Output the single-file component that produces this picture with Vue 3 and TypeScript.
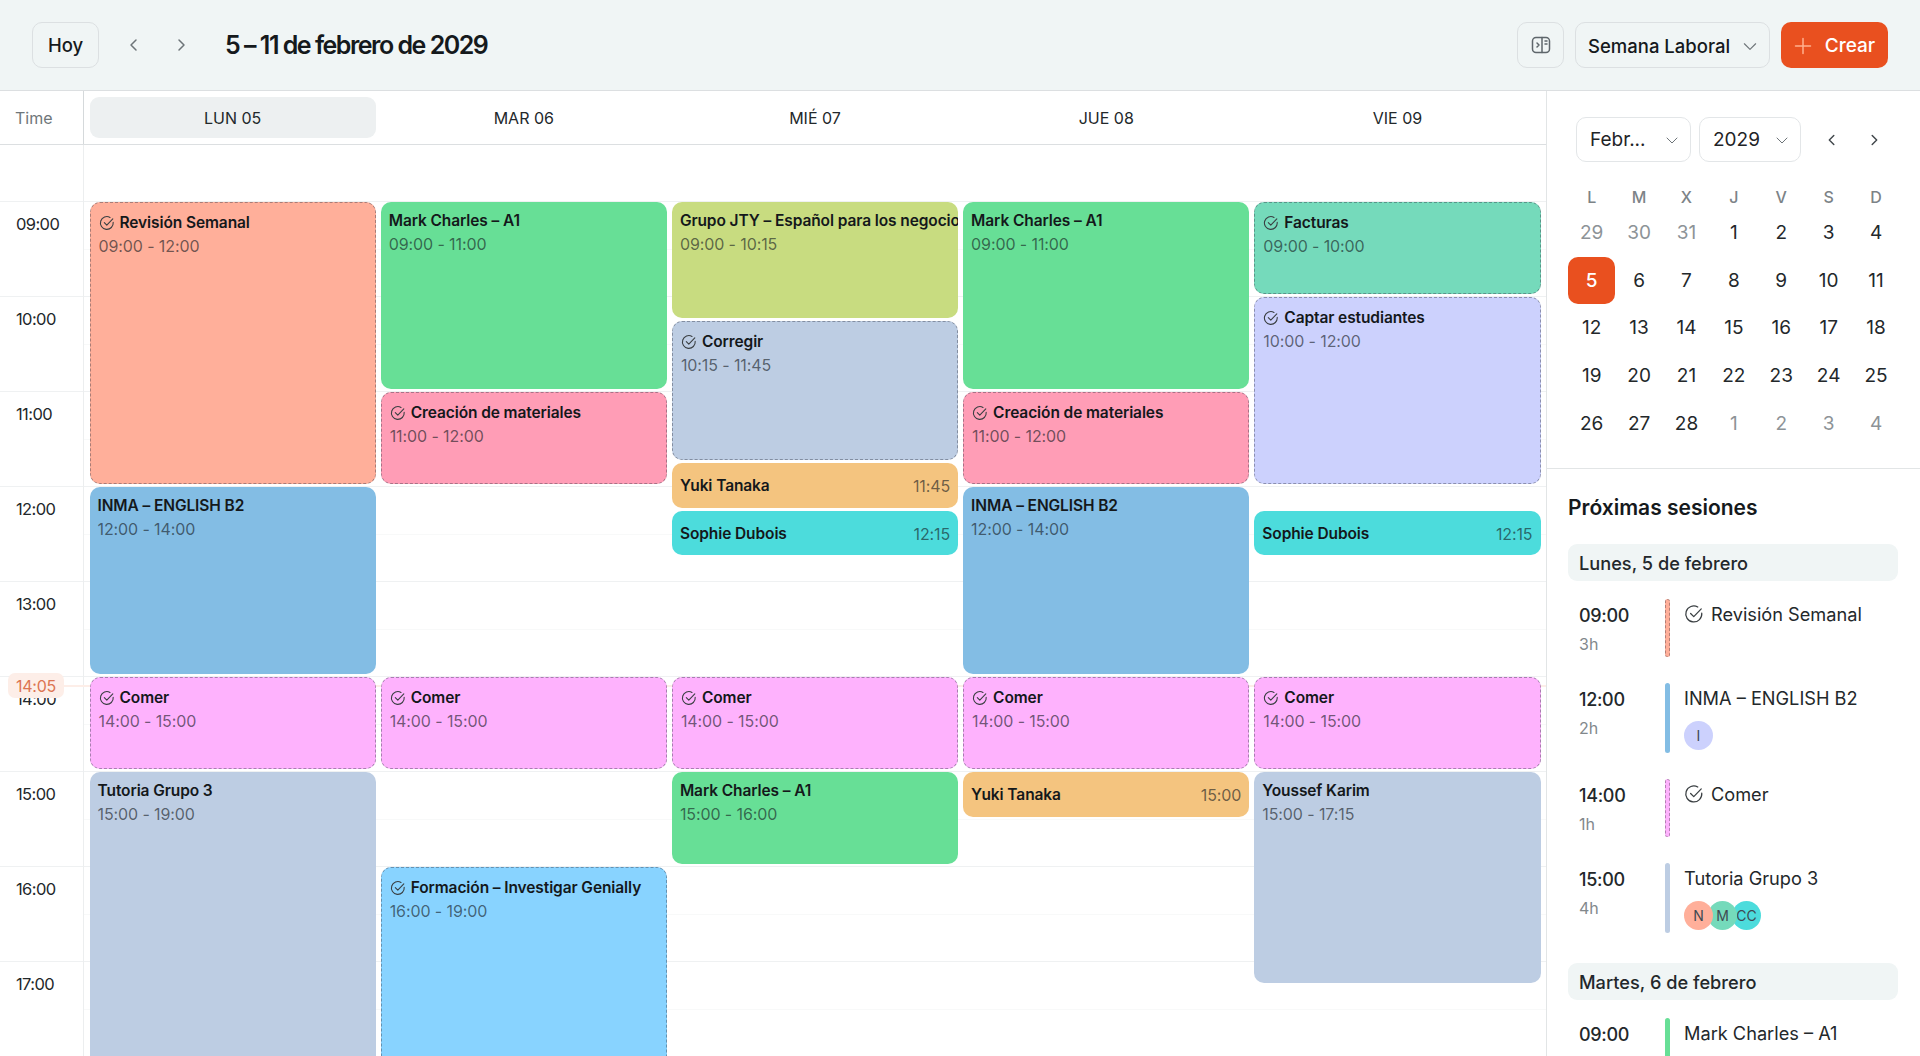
<template>
  <div class="app">
    <header class="topbar">
      <button class="btn today">Hoy</button>
      <button class="arrow"><svg width="20" height="20" viewBox="0 0 20 20"><path d="M12 5l-5 5 5 5" /></svg></button>
      <button class="arrow"><svg width="20" height="20" viewBox="0 0 20 20"><path d="M8 5l5 5-5 5" /></svg></button>
      <h1 class="range">5 – 11 de febrero de 2029</h1>
      <div class="spacer"></div>
      <button class="btn panel-btn">
        <svg width="20" height="20" viewBox="0 0 20 20">
          <rect x="1.5" y="2.5" width="17" height="15" rx="3.5" />
          <path d="M11 2.5v15M14 6h2M14 9h2M6 8l2 2-2 2" />
        </svg>
      </button>
      <button class="btn view-select">
        Semana Laboral
        <svg width="18" height="18" viewBox="0 0 16 16"><path d="M3 6l5 5 5-5" /></svg>
      </button>
      <button class="create">
        <svg width="18" height="18" viewBox="0 0 18 18"><path d="M9 1.5v15M1.5 9h15" /></svg>
        Crear
      </button>
    </header>

    <div class="body">
      <main class="calendar">
        <div class="week-head">
          <div class="time-label">Time</div>
          <div class="day-heads">
            <div v-for="(d, i) in days" :key="d.label" class="day-head">
              <span class="day-pill" :class="{ active: i === 0 }">{{ d.label }}</span>
            </div>
          </div>
        </div>

        <div class="grid">
          <div class="hours">
            <div v-for="h in hours" :key="h" class="hour">{{ h }}</div>
            <div class="now-chip">14:05</div>
          </div>
          <div class="columns">
            <div class="lines">
              <div v-for="h in hours" :key="h" class="line"></div>
            </div>
            <div class="now-line"></div>
            <div v-for="d in days" :key="d.label" class="col">
              <div
                v-for="e in d.events"
                :key="e.title + e.start"
                class="event"
                :class="{ task: e.task, compact: e.compact }"
                :style="eventStyle(e)"
              >
                <template v-if="e.compact">
                  <span class="ev-title">{{ e.title }}</span>
                  <span class="ev-time">{{ e.start }}</span>
                </template>
                <template v-else>
                  <div class="ev-title">
                    <svg v-if="e.task" class="check" width="16" height="16" viewBox="0 0 16 16">
                      <path d="M14.2 7.3a6.4 6.4 0 1 1-3.2-4.9" />
                      <path d="M5.3 7.6l2.5 2.5 6-6.2" />
                    </svg>
                    {{ e.title }}
                  </div>
                  <div class="ev-time">{{ e.start }} - {{ e.end }}</div>
                </template>
              </div>
            </div>
          </div>
        </div>
      </main>

      <aside class="side">
        <section class="mini">
          <div class="mini-controls">
            <button class="select month">
              <span>Febr...</span>
              <svg width="16" height="16" viewBox="0 0 16 16"><path d="M3 6l5 5 5-5" /></svg>
            </button>
            <button class="select year">
              <span>2029</span>
              <svg width="16" height="16" viewBox="0 0 16 16"><path d="M3 6l5 5 5-5" /></svg>
            </button>
            <button class="mini-arrow"><svg width="18" height="18" viewBox="0 0 20 20"><path d="M12 5l-5 5 5 5" /></svg></button>
            <button class="mini-arrow"><svg width="18" height="18" viewBox="0 0 20 20"><path d="M8 5l5 5-5 5" /></svg></button>
          </div>
          <div class="mini-grid">
            <div v-for="w in weekdays" :key="w" class="wd">{{ w }}</div>
            <div
              v-for="c in cells"
              :key="c.key"
              class="cell"
              :class="{ muted: c.muted, selected: c.selected }"
            >{{ c.n }}</div>
          </div>
        </section>

        <section class="upcoming">
          <h2>Próximas sesiones</h2>
          <div v-for="g in sessions" :key="g.day" class="group">
            <div class="band">{{ g.day }}</div>
            <div v-for="s in g.items" :key="s.title" class="session">
              <div class="s-time">
                <div class="s-start">{{ s.start }}</div>
                <div class="s-dur">{{ s.dur }}</div>
              </div>
              <div class="s-bar" :class="{ dotted: s.task }" :style="{ background: s.color }"></div>
              <div class="s-body">
                <div class="s-title">
                  <svg v-if="s.task" class="s-check" width="20" height="20" viewBox="0 0 16 16">
                    <path d="M14.2 7.3a6.4 6.4 0 1 1-3.2-4.9" />
                    <path d="M5.3 7.6l2.5 2.5 6-6.2" />
                  </svg>
                  {{ s.title }}
                </div>
                <div v-if="s.people" class="avatars">
                  <span
                    v-for="(p, i) in s.people"
                    :key="p.t"
                    class="avatar"
                    :style="{ background: p.c, zIndex: s.people.length - i }"
                  >{{ p.t }}</span>
                </div>
              </div>
            </div>
          </div>
        </section>
      </aside>
    </div>
  </div>
</template>

<script setup lang="ts">
interface CalEvent {
  title: string;
  start: string;
  end?: string;
  color: string;
  task?: boolean;
  compact?: boolean;
}

const HOUR = 95;
const FIRST = 8.4; // the grid is scrolled a little past 08:00

const C = {
  salmon: '#ffaf9a',
  green: '#67df96',
  lime: '#c8dc80',
  gray: '#bdcde3',
  orange: '#f4c47f',
  cyan: '#4cdcdc',
  pink: '#ff9db6',
  steel: '#83bde4',
  magenta: '#feb2fd',
  sky: '#88d3ff',
  teal: '#75dabb',
  lavender: '#ccd1fd',
};

const comer: CalEvent = { title: 'Comer', start: '14:00', end: '15:00', color: C.magenta, task: true };
const mark: CalEvent = { title: 'Mark Charles – A1', start: '09:00', end: '11:00', color: C.green };
const materiales: CalEvent = { title: 'Creación de materiales', start: '11:00', end: '12:00', color: C.pink, task: true };
const inma: CalEvent = { title: 'INMA – ENGLISH B2', start: '12:00', end: '14:00', color: C.steel };
const sophie: CalEvent = { title: 'Sophie Dubois', start: '12:15', end: '12:45', color: C.cyan, compact: true };

const days: { label: string; events: CalEvent[] }[] = [
  {
    label: 'LUN 05',
    events: [
      { title: 'Revisión Semanal', start: '09:00', end: '12:00', color: C.salmon, task: true },
      inma,
      comer,
      { title: 'Tutoria Grupo 3', start: '15:00', end: '19:00', color: C.gray },
    ],
  },
  {
    label: 'MAR 06',
    events: [
      mark,
      materiales,
      comer,
      { title: 'Formación – Investigar Genially', start: '16:00', end: '19:00', color: C.sky, task: true },
    ],
  },
  {
    label: 'MIÉ 07',
    events: [
      { title: 'Grupo JTY – Español para los negocios', start: '09:00', end: '10:15', color: C.lime },
      { title: 'Corregir', start: '10:15', end: '11:45', color: C.gray, task: true },
      { title: 'Yuki Tanaka', start: '11:45', end: '12:15', color: C.orange, compact: true },
      sophie,
      comer,
      { title: 'Mark Charles – A1', start: '15:00', end: '16:00', color: C.green },
    ],
  },
  {
    label: 'JUE 08',
    events: [
      mark,
      materiales,
      inma,
      comer,
      { title: 'Yuki Tanaka', start: '15:00', end: '15:30', color: C.orange, compact: true },
    ],
  },
  {
    label: 'VIE 09',
    events: [
      { title: 'Facturas', start: '09:00', end: '10:00', color: C.teal, task: true },
      { title: 'Captar estudiantes', start: '10:00', end: '12:00', color: C.lavender, task: true },
      sophie,
      comer,
      { title: 'Youssef Karim', start: '15:00', end: '17:15', color: C.gray },
    ],
  },
];

const hours = ['', '09:00', '10:00', '11:00', '12:00', '13:00', '14:00', '15:00', '16:00', '17:00'];

const toHours = (t: string) => {
  const [h, m] = t.split(':').map(Number);
  return h + m / 60;
};

const eventStyle = (e: CalEvent) => {
  const top = (toHours(e.start) - FIRST) * HOUR;
  const height = (toHours(e.end ?? e.start) - toHours(e.start)) * HOUR - 3;
  return {
    top: `${top}px`,
    height: `${height}px`,
    background: e.color,
  };
};

const weekdays = ['L', 'M', 'X', 'J', 'V', 'S', 'D'];

const cells = [
  ...[29, 30, 31].map((n) => ({ key: `p${n}`, n, muted: true, selected: false })),
  ...Array.from({ length: 28 }, (_, i) => ({ key: `c${i}`, n: i + 1, muted: false, selected: i === 4 })),
  ...[1, 2, 3, 4].map((n) => ({ key: `n${n}`, n, muted: true, selected: false })),
];

interface Session {
  start: string;
  dur: string;
  title: string;
  color: string;
  task?: boolean;
  people?: { t: string; c: string }[];
}

const sessions: { day: string; items: Session[] }[] = [
  {
    day: 'Lunes, 5 de febrero',
    items: [
      { start: '09:00', dur: '3h', title: 'Revisión Semanal', color: C.salmon, task: true },
      {
        start: '12:00',
        dur: '2h',
        title: 'INMA – ENGLISH B2',
        color: C.steel,
        people: [{ t: 'I', c: C.lavender }],
      },
      { start: '14:00', dur: '1h', title: 'Comer', color: C.magenta, task: true },
      {
        start: '15:00',
        dur: '4h',
        title: 'Tutoria Grupo 3',
        color: C.gray,
        people: [
          { t: 'N', c: C.salmon },
          { t: 'M', c: C.teal },
          { t: 'CC', c: C.cyan },
        ],
      },
    ],
  },
  {
    day: 'Martes, 6 de febrero',
    items: [{ start: '09:00', dur: '2h', title: 'Mark Charles – A1', color: C.green }],
  },
];
</script>

<style>
html,
body {
  margin: 0;
  height: 100%;
  overflow: hidden;
  background: #fff;
}
</style>

<style scoped>
.app {
  width: 1920px;
  height: 1056px;
  display: flex;
  flex-direction: column;
  overflow: hidden;
  font-family: 'Inter', 'Noto Sans', sans-serif;
  color: #15191c;
}

button {
  font: inherit;
  color: inherit;
  background: none;
  border: none;
  padding: 0;
}

svg {
  fill: none;
  stroke: currentColor;
  stroke-linecap: round;
  stroke-linejoin: round;
}

.topbar {
  height: 91px;
  flex: none;
  box-sizing: border-box;
  padding: 0 32px;
  display: flex;
  align-items: center;
  background: #f0f5f5;
  border-bottom: 1px solid #dcdfe1;
}

.btn {
  height: 46px;
  box-sizing: border-box;
  border: 1.5px solid #dce0e2;
  border-radius: 10px;
  display: flex;
  align-items: center;
  font-size: 18.5px;
  font-weight: 500;
}

.today {
  width: 67px;
  margin-right: 11px;
  justify-content: center;
}

.arrow {
  width: 47px;
  height: 46px;
  display: flex;
  align-items: center;
  justify-content: center;
  color: #6d7478;
  stroke-width: 1.5;
}

.range {
  margin: 0 0 0 21px;
  font-size: 25px;
  font-weight: 600;
  letter-spacing: -1.5px;
}

.spacer {
  flex: 1;
}

.panel-btn {
  width: 47px;
  justify-content: center;
  color: #5e666b;
  stroke-width: 1.5;
}

.view-select {
  width: 195px;
  margin-left: 11px;
  padding: 1px 10px 0 12px;
  justify-content: space-between;
}

.view-select svg {
  color: #6d7478;
}

.create {
  width: 107px;
  height: 46px;
  margin-left: 11px;
  padding-top: 1px;
  border-radius: 10px;
  background: #e9501f;
  color: #fff;
  font-size: 19px;
  font-weight: 500;
  display: flex;
  align-items: center;
  justify-content: center;
  gap: 13px;
}

.create svg {
  color: #ffb08f;
  stroke-width: 1.5;
}

.body {
  flex: 1;
  min-height: 0;
  display: flex;
}

.calendar {
  width: 1546px;
  flex: none;
  display: flex;
  flex-direction: column;
  border-right: 1px solid #e2e5e6;
  box-sizing: content-box;
  overflow: hidden;
}

.week-head {
  height: 54px;
  flex: none;
  box-sizing: border-box;
  display: flex;
  border-bottom: 1px solid #dcdfe1;
}

.time-label {
  width: 84px;
  flex: none;
  box-sizing: border-box;
  padding-left: 15px;
  display: flex;
  align-items: center;
  border-right: 1px solid #d5d9db;
  font-size: 16px;
  color: #6f767a;
}

.day-heads {
  flex: 1;
  min-width: 0;
  padding: 0 3px;
  display: flex;
}

.day-head {
  flex: 1;
  min-width: 0;
  padding: 6px 2.5px 6px;
  display: flex;
}

.day-pill {
  flex: 1;
  padding-top: 1px;
  display: flex;
  align-items: center;
  justify-content: center;
  border-radius: 9px;
  font-size: 16px;
  color: #23282b;
}

.day-pill.active {
  background: #edf0f1;
}

.grid {
  flex: 1;
  min-height: 0;
  display: flex;
  overflow: hidden;
}

.hours {
  width: 84px;
  flex: none;
  position: relative;
  box-sizing: border-box;
  border-right: 1px solid #eceeef;
}

.hour {
  height: 95px;
  box-sizing: border-box;
  padding: 10px 0 0 16px;
  font-size: 16.5px;
  line-height: 24px;
  letter-spacing: -0.6px;
  color: #23282b;
  border-bottom: 1px solid #eff1f2;
}

.hour:first-child {
  height: 57px;
}

.now-chip {
  position: absolute;
  left: 8px;
  top: 528px;
  width: 56px;
  height: 25px;
  border-radius: 7px;
  background: #fdeee8;
  color: #dc7452;
  font-size: 16px;
  letter-spacing: -0.3px;
  line-height: 26px;
  text-align: center;
}

.now-chip::after {
  content: '';
  position: absolute;
  left: 56px;
  top: 12px;
  width: 20px;
  border-top: 2px solid #fdeee8;
}

.columns {
  flex: 1;
  min-width: 0;
  padding: 0 3px;
  display: flex;
  position: relative;
}

.lines {
  position: absolute;
  inset: 0;
}

.line {
  height: 95px;
  box-sizing: border-box;
  position: relative;
  border-bottom: 1.5px solid #eff1f2;
}

.line::after {
  content: '';
  position: absolute;
  left: 0;
  right: 0;
  top: 47px;
  border-top: 1px solid #f8f9f9;
}

.line:first-child {
  height: 57px;
}

.line:first-child::after {
  display: none;
}

.now-line {
  position: absolute;
  left: 0;
  right: 0;
  top: 540px;
  border-top: 2px solid #fdeee8;
}

.col {
  flex: 1;
  min-width: 0;
  position: relative;
}

.event {
  position: absolute;
  left: 2.5px;
  right: 2.5px;
  box-sizing: border-box;
  border-radius: 10px;
  padding: 8px;
  overflow: hidden;
  white-space: nowrap;
}

.event.task {
  padding: 9px 8px;
  border: 1.2px dashed rgba(50, 55, 70, 0.42);
}

.event.compact {
  padding-top: 9px;
  display: flex;
  align-items: center;
  justify-content: space-between;
}

.ev-title {
  display: flex;
  align-items: center;
  font-size: 15.5px;
  line-height: 22px;
  font-weight: 600;
  letter-spacing: -0.1px;
  color: #14181b;
}

.check {
  flex: none;
  margin-right: 5px;
  stroke-width: 1.1;
  color: #3a3f42;
}

.ev-time {
  margin-top: 1px;
  font-size: 16px;
  line-height: 22px;
  color: rgba(20, 25, 30, 0.62);
  letter-spacing: -0.1px;
}

.compact .ev-time {
  margin-top: 0;
}

.side {
  flex: 1;
  min-width: 0;
  display: flex;
  flex-direction: column;
}

.mini {
  height: 378px;
  flex: none;
  box-sizing: border-box;
  padding: 26px 21px 0 21px;
  border-bottom: 1px solid #e2e5e6;
}

.mini-controls {
  display: flex;
  align-items: center;
  padding-left: 8px;
}

.select {
  height: 45px;
  box-sizing: border-box;
  border: 1.5px solid #e3e6e8;
  border-radius: 10px;
  display: flex;
  align-items: center;
  justify-content: space-between;
  padding: 0 10px 0 13px;
  font-size: 19px;
  color: #1f2427;
}

.select svg {
  color: #6d7478;
}

.month {
  width: 115px;
}

.year {
  width: 102px;
  margin-left: 8px;
}

.mini-arrow {
  width: 42px;
  height: 42px;
  display: flex;
  align-items: center;
  justify-content: center;
  color: #41474b;
  stroke-width: 1.6;
}

.year + .mini-arrow {
  margin-left: 10px;
}

.mini-grid {
  margin-top: 23px;
  display: grid;
  grid-template-columns: repeat(7, 47.4px);
}

.wd {
  height: 24px;
  display: flex;
  align-items: center;
  justify-content: center;
  font-size: 16px;
  font-weight: 500;
  color: #7c8387;
}

.cell {
  height: 47.6px;
  display: flex;
  align-items: center;
  justify-content: center;
  font-size: 19px;
  color: #23282b;
  border-radius: 10px;
}

.cell.muted {
  color: #8d9397;
}

.cell.selected {
  background: #e9501f;
  color: #fff;
  font-weight: 500;
}

.upcoming {
  padding: 24px 22px 0 21px;
}

.upcoming h2 {
  margin: 0 0 21px;
  font-size: 21px;
  line-height: 30px;
  font-weight: 600;
  color: #15191c;
}

.band {
  height: 37px;
  padding-left: 11px;
  display: flex;
  align-items: center;
  background: #f0f5f5;
  border-radius: 9px;
  font-size: 18.2px;
  font-weight: 500;
  color: #23282b;
}

.group + .group {
  margin-top: 30px;
}

.session {
  display: flex;
  margin-top: 26px;
}

.band + .session {
  margin-top: 18px;
}

.s-time {
  width: 86px;
  flex: none;
  padding: 4px 0 0 11px;
  box-sizing: content-box;
}

.s-start {
  font-size: 18px;
  line-height: 26px;
  font-weight: 500;
  letter-spacing: -0.3px;
  color: #23282b;
}

.s-dur {
  margin-top: 4px;
  font-size: 16px;
  line-height: 22px;
  color: #82888c;
}

.s-bar {
  width: 5px;
  flex: none;
  box-sizing: border-box;
  border-radius: 3px;
}

.s-bar.dotted {
  border: 1px dashed rgba(60, 50, 60, 0.38);
}

.s-body {
  margin-left: 14px;
  padding: 2px 0 3px;
  min-height: 58px;
  box-sizing: border-box;
}

.s-title {
  display: flex;
  align-items: center;
  font-size: 18.2px;
  line-height: 26px;
  color: #23282b;
}

.s-check {
  margin-right: 7px;
  stroke-width: 1;
  color: #3a3f42;
}

.avatars {
  margin-top: 10px;
  display: flex;
}

.avatar {
  width: 29px;
  height: 29px;
  margin-right: -5px;
  position: relative;
  border-radius: 50%;
  display: flex;
  align-items: center;
  justify-content: center;
  overflow: hidden;
  font-size: 14px;
  color: #3f4a52;
}
</style>
